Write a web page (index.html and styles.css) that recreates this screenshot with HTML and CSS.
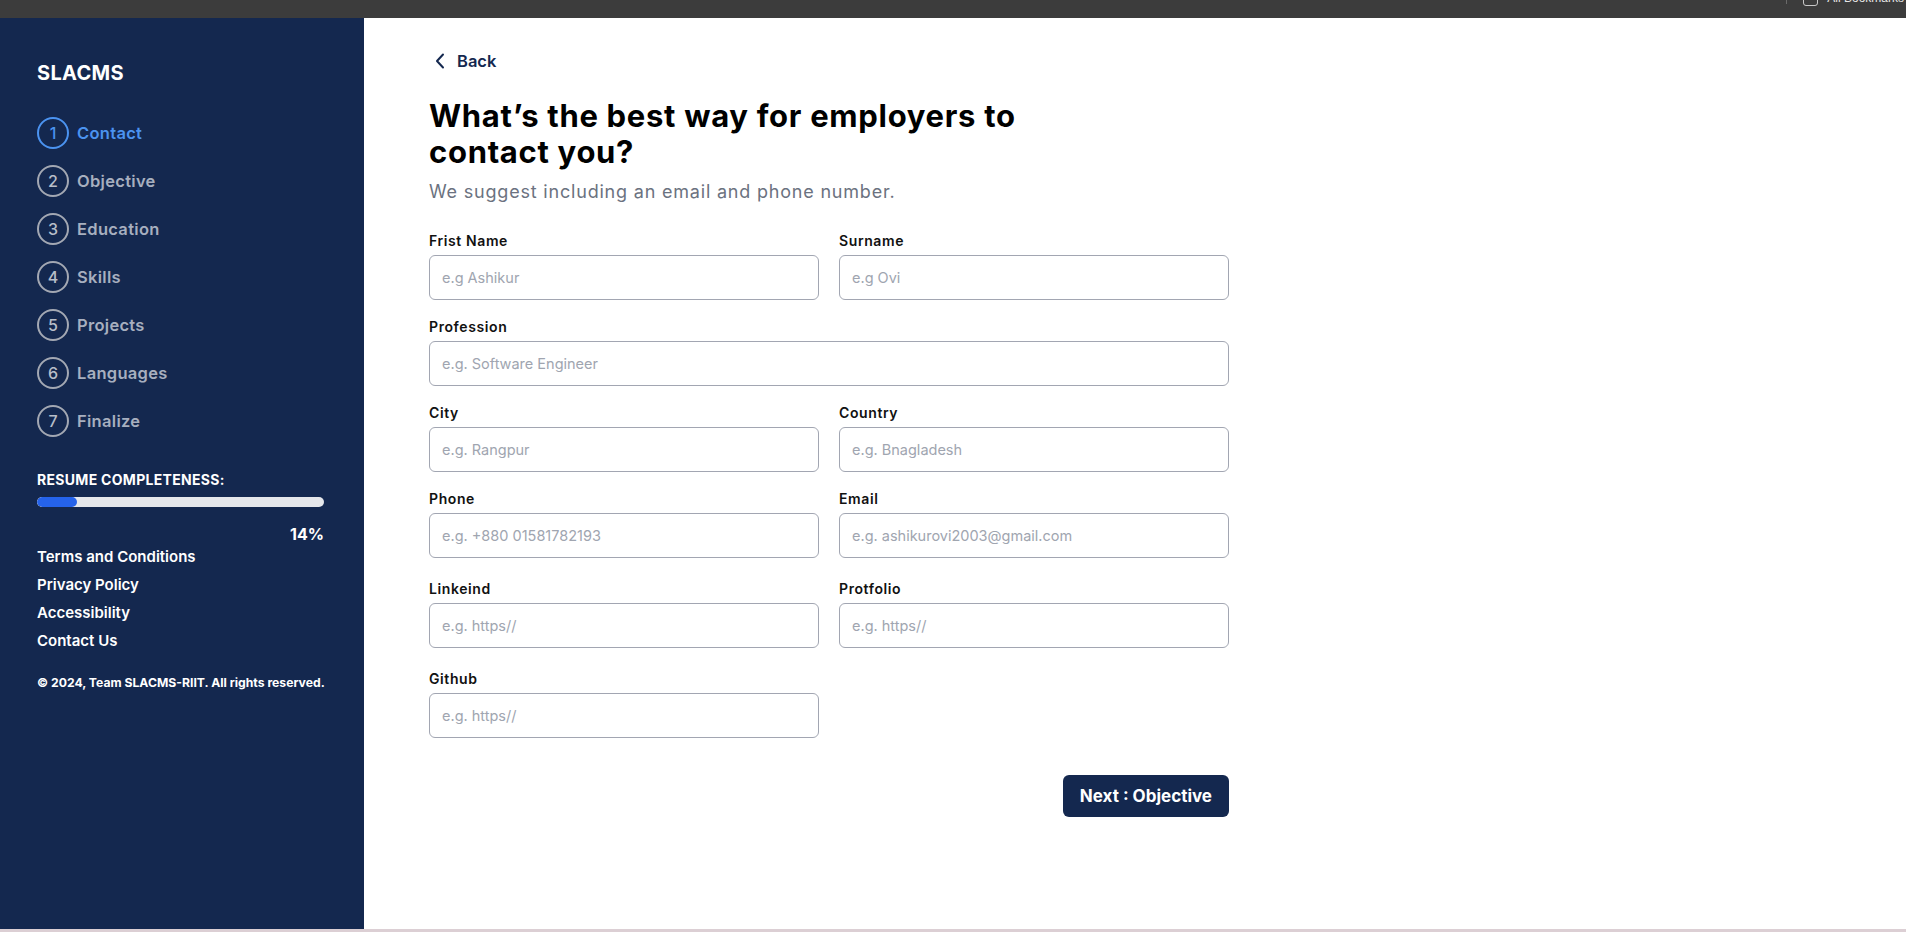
FILE: index.html
```html
<!DOCTYPE html>
<html lang="en">
<head>
<meta charset="utf-8">
<title>SLACMS - Contact</title>
<link rel="stylesheet" href="styles.css">
</head>
<body>
<div class="chrome">
  <div class="chrome-right">
    <span class="chrome-sep"></span>
    <span class="chrome-icon"></span>
    <span class="chrome-text">All Bookmarks</span>
  </div>
</div>
<div class="app">
  <aside class="sidebar">
    <div class="brand">SLACMS</div>
    <ol class="steps">
      <li class="step active"><span class="step-num">1</span><span class="step-label">Contact</span></li>
      <li class="step"><span class="step-num">2</span><span class="step-label">Objective</span></li>
      <li class="step"><span class="step-num">3</span><span class="step-label">Education</span></li>
      <li class="step"><span class="step-num">4</span><span class="step-label">Skills</span></li>
      <li class="step"><span class="step-num">5</span><span class="step-label">Projects</span></li>
      <li class="step"><span class="step-num">6</span><span class="step-label">Languages</span></li>
      <li class="step"><span class="step-num">7</span><span class="step-label">Finalize</span></li>
    </ol>
    <div class="progress-title">RESUME COMPLETENESS:</div>
    <div class="progress-track"><div class="progress-fill" style="width:14%"></div></div>
    <div class="progress-pct">14%</div>
    <nav class="links">
      <a href="#">Terms and Conditions</a>
      <a href="#">Privacy Policy</a>
      <a href="#">Accessibility</a>
      <a href="#">Contact Us</a>
    </nav>
    <p class="copy">© 2024, Team SLACMS-RIIT. All rights reserved.</p>
  </aside>
  <main class="content">
    <a class="back" href="#">
      <svg class="back-icon" width="10" height="16" viewBox="0 0 10 16" aria-hidden="true"><path d="M8 1.5 L2 8 L8 14.5" fill="none" stroke="#14284f" stroke-width="2" stroke-linecap="round" stroke-linejoin="round"/></svg>
      <span>Back</span>
    </a>
    <h1 class="title">What’s the best way for employers to contact you?</h1>
    <p class="subtitle">We suggest including an email and phone number.</p>
    <form class="form">
      <div class="field">
        <label>Frist Name</label>
        <input type="text" placeholder="e.g Ashikur">
      </div>
      <div class="field">
        <label>Surname</label>
        <input type="text" placeholder="e.g Ovi">
      </div>
      <div class="field wide">
        <label>Profession</label>
        <input type="text" placeholder="e.g. Software Engineer">
      </div>
      <div class="field">
        <label>City</label>
        <input type="text" placeholder="e.g. Rangpur">
      </div>
      <div class="field">
        <label>Country</label>
        <input type="text" placeholder="e.g. Bnagladesh">
      </div>
      <div class="field">
        <label>Phone</label>
        <input type="text" placeholder="e.g. +880 01581782193">
      </div>
      <div class="field">
        <label>Email</label>
        <input type="text" placeholder="e.g. ashikurovi2003@gmail.com">
      </div>
      <div class="field spaced">
        <label>Linkeind</label>
        <input type="text" placeholder="e.g. https//">
      </div>
      <div class="field spaced">
        <label>Protfolio</label>
        <input type="text" placeholder="e.g. https//">
      </div>
      <div class="field spaced">
        <label>Github</label>
        <input type="text" placeholder="e.g. https//">
      </div>
      <div class="actions">
        <button type="button" class="next-btn">Next : Objective</button>
      </div>
    </form>
  </main>
</div>
<div class="bottom-strip"></div>
</body>
</html>
```

FILE: styles.css
```css
* { box-sizing: border-box; }

html, body {
  margin: 0;
  padding: 0;
  height: 932px;
  overflow: hidden;
}

body {
  display: flex;
  flex-direction: column;
  font-family: Inter, "Open Sans", "DejaVu Sans", sans-serif;
  background: #ffffff;
  color: #111111;
}

/* browser chrome strip */
.chrome {
  height: 18px;
  flex: 0 0 18px;
  background: #3c3c3c;
  display: flex;
  justify-content: flex-end;
  overflow: hidden;
}

.chrome-right {
  display: flex;
  align-items: flex-end;
  margin-top: -12px;
  height: 18px;
  padding-right: 2px;
}

.chrome-sep {
  width: 1px;
  height: 16px;
  background: #6a6a6a;
  margin-right: 16px;
  align-self: flex-start;
}

.chrome-icon {
  width: 15px;
  height: 16px;
  border: 1.5px solid #c8c8c8;
  border-radius: 3px;
  margin-right: 9px;
}

.chrome-text {
  font-family: "Liberation Sans", Arial, sans-serif;
  font-size: 12px;
  line-height: 16px;
  color: #e6e6e6;
}

.app {
  flex: 1 1 auto;
  display: flex;
  min-height: 0;
}

/* sidebar */
.sidebar {
  width: 364px;
  flex: 0 0 364px;
  background: #14284f;
  padding: 43px 40px 0 37px;
  color: #ffffff;
}

.brand {
  font-size: 20px;
  font-weight: 700;
  line-height: 24px;
  letter-spacing: 0.3px;
}

.steps {
  list-style: none;
  margin: 32px 0 0;
  padding: 0;
  display: flex;
  flex-direction: column;
  gap: 16px;
}

.step {
  display: flex;
  align-items: center;
  gap: 8px;
  height: 32px;
  color: #a7afbf;
}

.step-num {
  width: 32px;
  height: 32px;
  border: 2px solid #a3a8b3;
  border-radius: 50%;
  display: flex;
  align-items: center;
  justify-content: center;
  font-size: 16px;
  font-weight: 500;
  color: #b8bec9;
}

.step-label {
  font-size: 16.5px;
  font-weight: 600;
  letter-spacing: 0.3px;
}

.step.active { color: #4b93f0; }
.step.active .step-num {
  border-color: #4b93f0;
  color: #4b93f0;
}

.progress-title {
  margin-top: 34px;
  font-size: 14px;
  font-weight: 700;
  line-height: 18px;
  letter-spacing: 0.3px;
}

.progress-track {
  margin-top: 8px;
  width: 287px;
  height: 10px;
  border-radius: 5px;
  background: #e5e7eb;
  overflow: hidden;
}

.progress-fill {
  height: 100%;
  border-radius: 5px;
  background: #2563eb;
}

.progress-pct {
  width: 287px;
  margin-top: 17px;
  text-align: right;
  font-size: 16px;
  font-weight: 700;
  line-height: 20px;
}

.links {
  margin-top: 3px;
  display: flex;
  flex-direction: column;
  gap: 8px;
}

.links a {
  color: #ffffff;
  text-decoration: none;
  font-size: 15px;
  font-weight: 600;
  line-height: 20px;
}

.copy {
  margin: 23px 0 0;
  font-size: 12.2px;
  font-weight: 700;
  line-height: 18px;
  white-space: nowrap;
}

/* main content */
.content {
  flex: 1 1 auto;
  padding: 31px 0 0 65px;
}

.back {
  display: inline-flex;
  align-items: center;
  gap: 12px;
  height: 24px;
  margin-left: 6px;
  color: #14284f;
  text-decoration: none;
  font-size: 16.5px;
  font-weight: 600;
}

.back-icon { display: block; }

.title {
  margin: 25px 0 0;
  max-width: 640px;
  font-size: 31px;
  font-weight: 700;
  line-height: 36px;
  letter-spacing: 0.7px;
  color: #000000;
}

.subtitle {
  margin: 10px 0 0;
  font-size: 18px;
  font-weight: 400;
  line-height: 24px;
  letter-spacing: 0.8px;
  color: #6b7280;
}

.form {
  margin-top: 27px;
  width: 800px;
  display: grid;
  grid-template-columns: 1fr 1fr;
  column-gap: 20px;
  row-gap: 17px;
}

.field {
  display: flex;
  flex-direction: column;
  gap: 4px;
}

.field.wide { grid-column: 1 / span 2; }
.field.spaced { margin-top: 4px; }

.field label {
  font-size: 14px;
  font-weight: 600;
  line-height: 20px;
  letter-spacing: 0.6px;
  color: #111111;
}

.field input {
  height: 45px;
  width: 100%;
  border: 1px solid #a2a6b2;
  border-radius: 6px;
  padding: 0 12px;
  font-family: inherit;
  font-size: 14.5px;
  color: #111111;
  background: #ffffff;
  outline: none;
}

.field input::placeholder { color: #a0a5b0; }

.actions {
  grid-column: 1 / span 2;
  display: flex;
  justify-content: flex-end;
  margin-top: 20px;
}

.next-btn {
  height: 42px;
  padding: 0 17px;
  border: none;
  border-radius: 6px;
  background: #14284f;
  color: #ffffff;
  font-family: inherit;
  font-size: 17px;
  font-weight: 700;
  cursor: pointer;
}

.bottom-strip {
  height: 3px;
  flex: 0 0 3px;
  background: #dccfd4;
}
```
